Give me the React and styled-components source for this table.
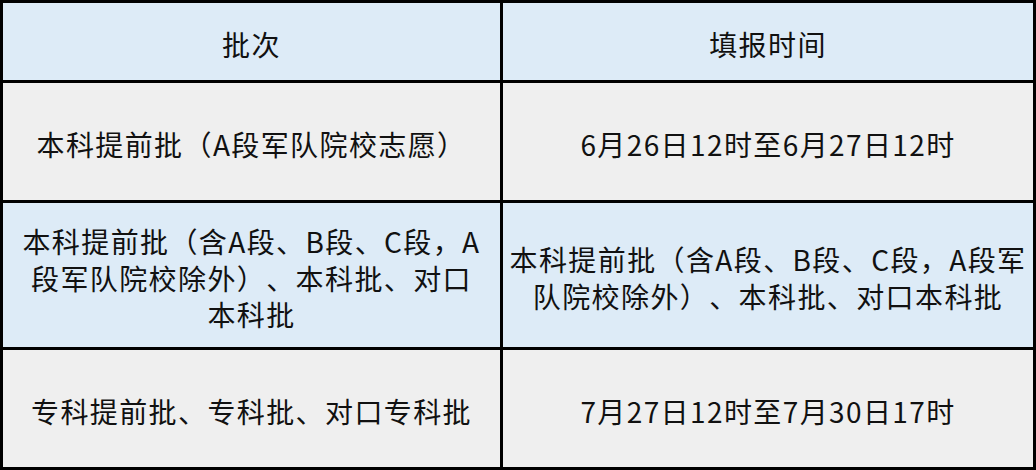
import React from 'react';
import styled, { createGlobalStyle } from 'styled-components';

const GlobalStyle = createGlobalStyle`
  html, body {
    margin: 0;
    padding: 0;
    background: #ffffff;
  }
`;

const Table = styled.div`
  display: grid;
  grid-template-columns: 497px 530px;
  grid-template-rows: 77px 117px 144px 117px;
  gap: 3px;
  padding: 3px;
  width: 1036px;
  height: 470px;
  box-sizing: border-box;
  background: #000000;
  font-family: 'Noto Sans CJK SC', 'Noto Sans', sans-serif;
  font-size: 28px;
  color: #111111;
`;

const Cell = styled.div`
  display: flex;
  flex-direction: column;
  align-items: center;
  justify-content: center;
  padding-top: 6px;
  box-sizing: border-box;
  background: ${(p) => (p.$blue ? '#ddebf7' : '#efefef')};
  text-align: center;
  line-height: 36.7px;
  letter-spacing: 1.4px;
  text-spacing-trim: space-all;
`;

const Line = styled.span`
  white-space: nowrap;
`;

const rows = [
  { blue: true, left: ['批次'], right: ['填报时间'] },
  { blue: false, left: ['本科提前批（A段军队院校志愿）'], right: ['6月26日12时至6月27日12时'] },
  {
    blue: true,
    left: ['本科提前批（含A段、B段、C段，A', '段军队院校除外）、本科批、对口', '本科批'],
    right: ['本科提前批（含A段、B段、C段，A段军', '队院校除外）、本科批、对口本科批'],
  },
  { blue: false, left: ['专科提前批、专科批、对口专科批'], right: ['7月27日12时至7月30日17时'] },
];

const App = () => {
  return (
    <>
      <GlobalStyle />
      <Table>
        {rows.map((r, i) => (
          <React.Fragment key={i}>
            <Cell $blue={r.blue}>
              {r.left.map((t) => (
                <Line key={t}>{t}</Line>
              ))}
            </Cell>
            <Cell $blue={r.blue}>
              {r.right.map((t) => (
                <Line key={t}>{t}</Line>
              ))}
            </Cell>
          </React.Fragment>
        ))}
      </Table>
    </>
  );
};

export default App;
